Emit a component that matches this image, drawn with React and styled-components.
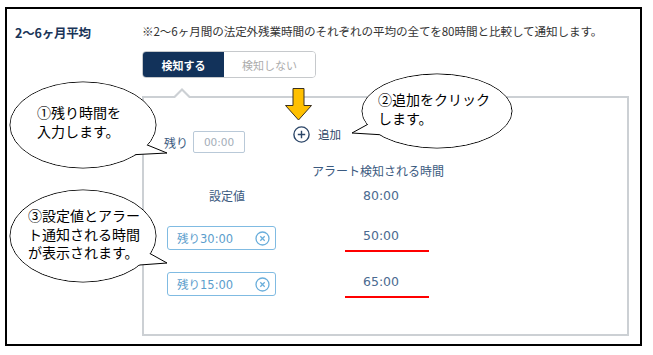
import React from "react";
import styled, { createGlobalStyle } from "styled-components";

const GlobalStyle = createGlobalStyle`
  html, body {
    margin: 0;
    padding: 0;
    background: #fff;
  }
  body {
    font-family: "Noto Sans CJK JP", sans-serif;
  }
`;

const UI_FONT = `"DejaVu Sans", "Noto Sans CJK JP", sans-serif`;

function App() {
  return (
    <Page>
      <GlobalStyle />
      <Frame>
        <Title>2～6ヶ月平均</Title>
        <Main>
          <Note>※2～6ヶ月間の法定外残業時間のそれぞれの平均の全てを80時間と比較して通知します。</Note>
          <Toggle>
            <ToggleButton $active>検知する</ToggleButton>
            <ToggleButton>検知しない</ToggleButton>
          </Toggle>
          <Panel>
            <InputRow>
              <RemainGroup>
                <Label>残り</Label>
                <TimeInput placeholder="00:00" />
              </RemainGroup>
              <AddButton>
                <svg width="17" height="17" viewBox="0 0 17 17">
                  <circle cx="8.5" cy="8.5" r="7.6" fill="none" stroke="#2c4668" strokeWidth="1.4" />
                  <path d="M8.5 4.8v7.4M4.8 8.5h7.4" stroke="#2c4668" strokeWidth="1.4" />
                </svg>
                <span>追加</span>
              </AddButton>
            </InputRow>
            <Caption>アラート検知される時間</Caption>
            <Table>
              <HeadCell>設定値</HeadCell>
              <ValueCell>80:00</ValueCell>
              {[
                ["残り30:00", "50:00"],
                ["残り15:00", "65:00"],
              ].map(([tag, value]) => (
                <React.Fragment key={tag}>
                  <Tag>
                    <span>{tag}</span>
                    <svg width="15" height="15" viewBox="0 0 15 15">
                      <circle cx="7.5" cy="7.5" r="6.5" fill="none" stroke="#6aaedb" strokeWidth="1.3" />
                      <path d="M5.3 5.3l4.4 4.4M9.7 5.3l-4.4 4.4" stroke="#6aaedb" strokeWidth="1.3" />
                    </svg>
                  </Tag>
                  <ValueCell $marked>
                    {value}
                    <RedLine />
                  </ValueCell>
                </React.Fragment>
              ))}
            </Table>
          </Panel>
        </Main>
      </Frame>

      <Arrow width="31" height="35" viewBox="0 0 31 35">
        <path
          d="M10 1.5h11v17h7.5L15.5 33 2.5 18.5H10z"
          fill="#ffc000"
          stroke="#3a3020"
          strokeWidth="1"
        />
      </Arrow>

      <Callout
        x={8}
        y={80}
        w={162}
        h={92}
        ell={[75, 45, 73, 43]}
        tail={[[132, 62], [159, 73], [120, 75]]}
        textX={29}
        textY={23}
        lines={["①残り時間を", "入力します。"]}
      />
      <Callout
        x={348}
        y={72}
        w={168}
        h={80}
        ell={[89, 39, 75, 37]}
        tail={[[24, 50], [4, 61], [37, 63]]}
        textX={30}
        textY={18}
        lines={["②追加をクリック", "します。"]}
      />
      <Callout
        x={8}
        y={188}
        w={162}
        h={97}
        ell={[75, 48, 73, 46]}
        tail={[[132, 60], [159, 75], [118, 78]]}
        textX={20}
        textY={18}
        lines={["③設定値とアラー", "ト通知される時間", "が表示されます。"]}
      />
    </Page>
  );
}

function Callout({ x, y, w, h, ell, tail, textX, textY, lines }) {
  const [cx, cy, rx, ry] = ell;
  const pts = tail.map((p) => p.join(",")).join(" ");
  return (
    <Bubble style={{ left: x, top: y, width: w, height: h }}>
      <svg width={w} height={h} viewBox={`0 0 ${w} ${h}`}>
        <ellipse cx={cx} cy={cy} rx={rx} ry={ry} fill="#fff" stroke="#000" strokeWidth="1" />
        <polygon points={pts} fill="#fff" stroke="#000" strokeWidth="1" strokeLinejoin="miter" />
        <ellipse cx={cx} cy={cy} rx={rx - 0.6} ry={ry - 0.6} fill="#fff" />
      </svg>
      <BubbleText style={{ left: textX, top: textY }}>
        {lines.map((l) => (
          <div key={l}>{l}</div>
        ))}
      </BubbleText>
    </Bubble>
  );
}

export default App;

const Page = styled.div`
  position: relative;
  width: 653px;
  height: 355px;
  padding: 7px 0 0 5px;
  box-sizing: border-box;
`;

const Frame = styled.div`
  width: 637px;
  height: 339px;
  box-sizing: border-box;
  border: 2px solid #000;
  display: grid;
  grid-template-columns: 135px 1fr;
`;

const Title = styled.div`
  padding: 16px 0 0 8px;
  font-size: 12.5px;
  line-height: 15px;
  font-weight: 700;
  color: #1a3558;
  letter-spacing: -0.2px;
`;

const Main = styled.div`
  display: flex;
  flex-direction: column;
  align-items: flex-start;
  padding-top: 15px;
`;

const Note = styled.div`
  font-size: 11.6px;
  line-height: 15px;
  color: #333;
  white-space: nowrap;
  letter-spacing: -0.1px;
`;

const Toggle = styled.div`
  margin-top: 12px;
  display: flex;
  height: 27px;
  border: 1px solid #c6c9cc;
  border-radius: 4px;
  overflow: hidden;
  box-sizing: border-box;
`;

const ToggleButton = styled.div`
  width: ${(p) => (p.$active ? "81px" : "91px")};
  display: flex;
  align-items: center;
  justify-content: center;
  font-size: 11px;
  font-weight: ${(p) => (p.$active ? 700 : 400)};
  background: ${(p) => (p.$active ? "#12325a" : "#fff")};
  color: ${(p) => (p.$active ? "#fff" : "#acacac")};
`;

const Panel = styled.div`
  position: relative;
  margin-top: 18px;
  width: 487px;
  height: 240px;
  box-sizing: border-box;
  border: 2px solid #ccd0d4;
  padding: 28px 0 0 20px;

  &::before,
  &::after {
    content: "";
    position: absolute;
    left: 29px;
    width: 0;
    height: 0;
    border-left: 9px solid transparent;
    border-right: 9px solid transparent;
  }
  &::before {
    top: -10px;
    border-bottom: 9px solid #ccd0d4;
  }
  &::after {
    top: -7px;
    border-bottom: 9px solid #fff;
  }
`;

const InputRow = styled.div`
  display: flex;
  align-items: flex-start;
  height: 27px;
`;

const RemainGroup = styled.div`
  display: flex;
  align-items: center;
  margin-top: 5px;
  gap: 5px;
`;

const Label = styled.span`
  font-size: 12px;
  color: #3b5a80;
`;

const TimeInput = styled.input`
  width: 52px;
  height: 22px;
  box-sizing: border-box;
  border: 1px solid #b9c9d8;
  border-radius: 2px;
  padding: 0;
  text-align: center;
  font-family: ${UI_FONT};
  font-size: 10.5px;
  outline: none;
  &::placeholder {
    color: #a3adb8;
  }
`;

const AddButton = styled.div`
  margin-left: 48px;
  display: flex;
  align-items: center;
  gap: 8px;
  font-size: 11.5px;
  color: #2c4668;
  line-height: 17px;
`;

const Caption = styled.div`
  margin: 8px 0 5px 147px;
  width: 134px;
  text-align: center;
  font-size: 12px;
  line-height: 20px;
  color: #3b5a80;
  white-space: nowrap;
`;

const Table = styled.div`
  display: grid;
  grid-template-columns: 109px 134px;
  grid-auto-rows: 20px 26px 26px;
  column-gap: 38px;
  row-gap: 20px;
  padding-left: 3px;
`;

const HeadCell = styled.div`
  padding-left: 11px;
  text-align: center;
  font-size: 12px;
  line-height: 20px;
  color: #3b5a80;
`;

const ValueCell = styled.div`
  display: flex;
  flex-direction: column;
  align-items: center;
  font-family: ${UI_FONT};
  font-size: 12.5px;
  line-height: 20px;
  color: #4a6a90;
`;

const RedLine = styled.div`
  margin: 4px 0 0 12px;
  width: 84px;
  height: 3px;
  background: #ff0000;
`;

const Tag = styled.div`
  height: 24px;
  box-sizing: border-box;
  border: 1.5px solid #80bbe2;
  border-radius: 3px;
  display: flex;
  align-items: center;
  justify-content: space-between;
  padding: 0 5px 0 9px;
  font-family: ${UI_FONT};
  font-size: 11.5px;
  color: #5b9dcc;
`;

const Arrow = styled.svg`
  position: absolute;
  left: 283px;
  top: 87px;
`;

const Bubble = styled.div`
  position: absolute;
  svg {
    position: absolute;
    left: 0;
    top: 0;
  }
`;

const BubbleText = styled.div`
  position: absolute;
  font-family: "Noto Sans CJK JP", sans-serif;
  font-size: 14px;
  line-height: 18.5px;
  color: #000;
  white-space: nowrap;
`;
